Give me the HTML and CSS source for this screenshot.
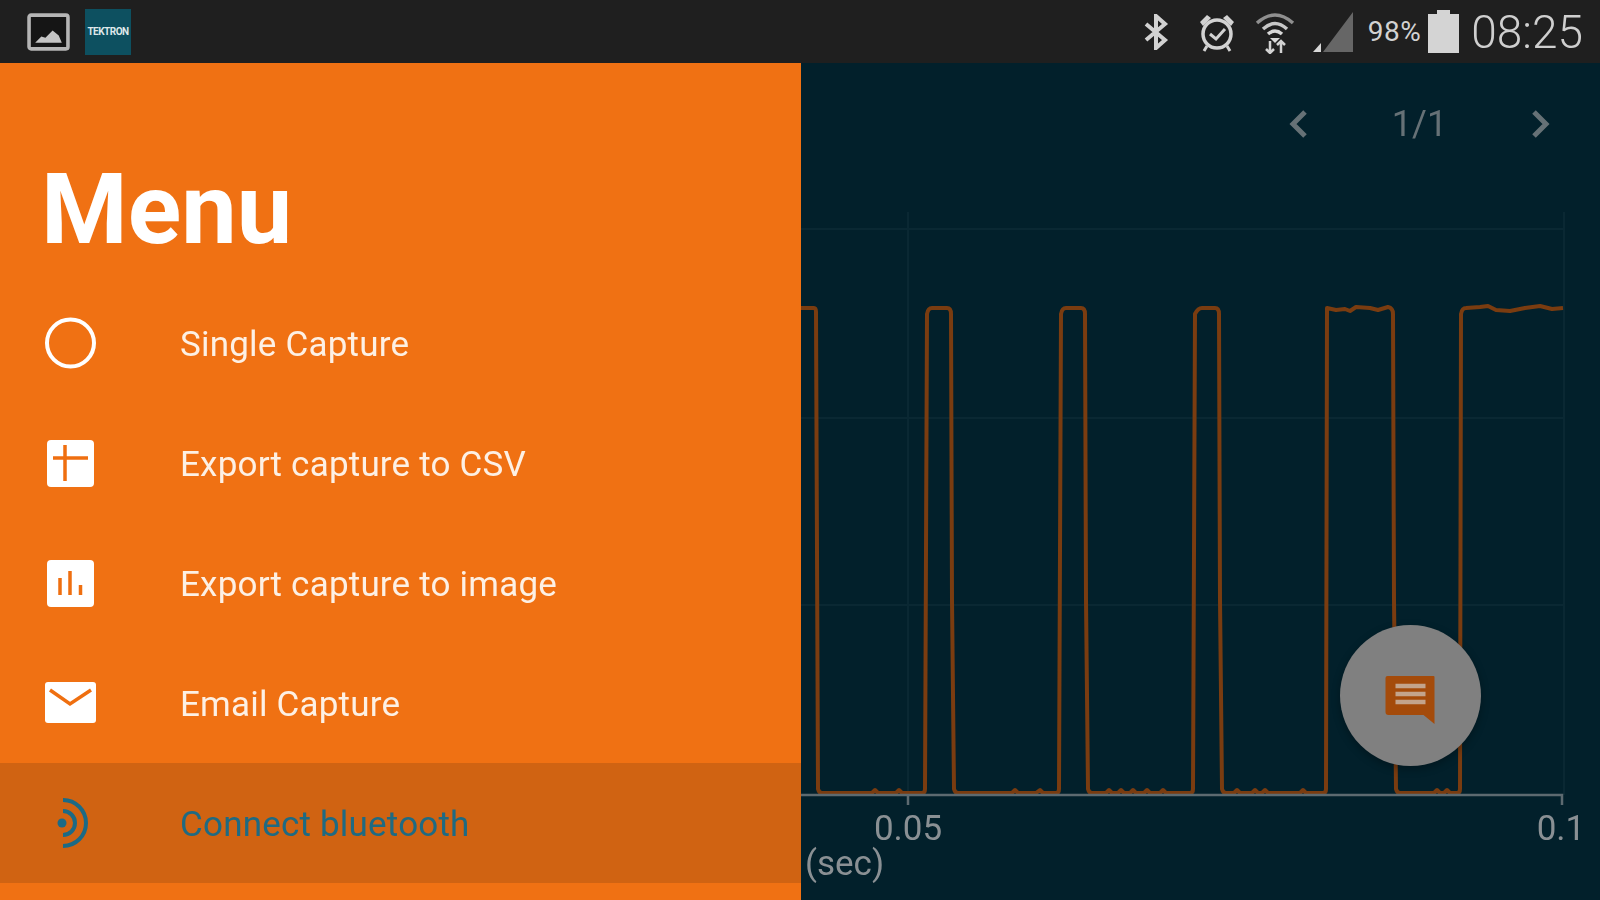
FILE: index.html
```html
<!DOCTYPE html>
<html lang="en">
<head>
    <meta charset="UTF-8">
    <meta name="viewport" content="width=device-width, initial-scale=1.0">
    <title>Capture Menu</title>
    <link rel="stylesheet" href="styles.css">
</head>
<body>
    <div id="status-bar">
        <div class="status-left">
            <svg class="icon-image" viewBox="0 0 42 37">
                <rect x="2" y="2" width="38" height="33" rx="2" fill="#151515" stroke="#b5b5b5" stroke-width="3.5"/>
                <path d="M8 29 L14 23 L18 24 L25 17 L31 22 L34 29 Z" fill="#c4c4c4"/>
            </svg>
            <div class="app-badge">TEKTRON</div>
        </div>
        <div class="status-right">
            <svg class="icon-bt" viewBox="0 0 26 36">
                <path d="M3 10 L22 26 L13 34 L13 2 L22 10 L3 26" fill="none" stroke="#d2d2d2" stroke-width="4"/>
            </svg>
            <svg class="icon-alarm" viewBox="0 0 38 40">
                <circle cx="19" cy="22" r="14" fill="none" stroke="#d2d2d2" stroke-width="3.5"/>
                <path d="M12 22 L18 27 L27 17" fill="none" stroke="#d2d2d2" stroke-width="3"/>
                <path d="M2 10 L9 3 L13 6 L5 14 Z M36 10 L29 3 L25 6 L33 14 Z" fill="#d2d2d2"/>
                <path d="M9 34 L6 39 M29 34 L32 39" stroke="#d2d2d2" stroke-width="3"/>
            </svg>
            <svg class="icon-wifi" viewBox="0 0 40 44">
                <path d="M2 13 Q20 -3 38 13" fill="none" stroke="#8f8f8f" stroke-width="3.5"/>
                <path d="M8 19 Q20 8 32 19" fill="none" stroke="#c8c8c8" stroke-width="3.5"/>
                <path d="M13 24 Q20 18 27 24" fill="none" stroke="#d8d8d8" stroke-width="3.5"/>
                <path d="M15 28 L25 28 L20 33 Z" fill="#d8d8d8"/>
                <path d="M15 31 V43 M11 39 L15 43 L19 39 M26 43 V31 M22 35 L26 31 L30 35" fill="none" stroke="#d2d2d2" stroke-width="2.5"/>
            </svg>
            <svg class="icon-signal" viewBox="0 0 40 40">
                <path d="M10 40 L40 0 V40 Z" fill="#666"/>
                <path d="M0 40 L8 31 V40 Z" fill="#d8d8d8"/>
            </svg>
            <span class="battery-text">98%</span>
            <svg class="icon-battery" viewBox="0 0 31 43">
                <path d="M9 0 H22 V4 H31 V43 H0 V4 H9 Z" fill="#d4d4d4"/>
            </svg>
            <span class="clock">08:25</span>
        </div>
    </div>

    <div id="main">
        <div id="drawer">
            <div class="drawer-title">Menu</div>
            <div class="menu-list">
                <div class="menu-item">
                    <svg class="menu-icon" viewBox="0 0 56 56">
                        <circle cx="28.5" cy="28" r="23.5" fill="none" stroke="#fff" stroke-width="4"/>
                    </svg>
                    <span class="menu-label">Single Capture</span>
                </div>
                <div class="menu-item">
                    <svg class="menu-icon" viewBox="0 0 56 56">
                        <rect x="5" y="5" width="47" height="47" rx="4" fill="#fff"/>
                        <path d="M23 10 V46 M11 23 H46" stroke="#ef6f10" stroke-width="3.5"/>
                    </svg>
                    <span class="menu-label">Export capture to CSV</span>
                </div>
                <div class="menu-item">
                    <svg class="menu-icon" viewBox="0 0 56 56">
                        <rect x="5" y="5" width="47" height="47" rx="4" fill="#fff"/>
                        <path d="M18 23 V40 M28 16 V40 M38.500 30 V40" stroke="#ef6f10" stroke-width="3.5"/>
                    </svg>
                    <span class="menu-label">Export capture to image</span>
                </div>
                <div class="menu-item">
                    <svg class="menu-icon" viewBox="0 0 56 56">
                        <rect x="3" y="7" width="51" height="41" rx="3" fill="#fff"/>
                        <path d="M8 15 L28 29 L49 15" fill="none" stroke="#ef6f10" stroke-width="3.5"/>
                    </svg>
                    <span class="menu-label">Email Capture</span>
                </div>
                <div class="menu-item selected">
                    <svg class="menu-icon" viewBox="0 0 56 56">
                        <circle cx="20" cy="28" r="4.500" fill="#1c6a85"/>
                        <path d="M21 16 A12 12 0 0 1 21 40 M21 5 A23 23 0 0 1 21 51" fill="none" stroke="#1c6a85" stroke-width="4"/>
                    </svg>
                    <span class="menu-label">Connect bluetooth</span>
                </div>
            </div>
        </div>

        <div id="chart">
            <svg class="chart-canvas" viewBox="801 63 799 837">
                <!-- grid -->
                <path d="M801 229 H1563 M801 418 H1563 M801 605 H1563 M908 212 V795 M1564 212 V795" fill="none" stroke="#0a2833" stroke-width="2"/>
                <!-- waveform -->
                <path class="trace" d="M801 308 H814 Q816 308 816 312 L818 789 Q819 793 822 793 H872 L875 790 L878 793 H896 L899 790 L902 793 H922 Q925 793 925 789 L927 314 Q928 308 932 308 H947 Q951 308 951 314 L952 600 L954 789 Q955 793 958 793 H1012 L1015 790 L1018 793 H1036 L1040 790 L1043 793 H1056 Q1059 793 1059 789 L1061 314 Q1062 308 1066 308 H1081 Q1085 308 1085 314 L1086 600 L1088 789 Q1089 793 1092 793 H1106 L1109 790 L1112 793 H1118 L1121 790 L1124 793 H1130 L1133 790 L1136 793 H1144 L1147 790 L1150 793 H1160 L1163 790 L1166 793 H1190 Q1193 793 1193 789 L1195 314 Q1198 308 1202 308 H1215 Q1219 308 1219 314 L1220 600 L1222 789 Q1223 793 1226 793 H1234 L1237 790 L1240 793 H1252 L1255 790 L1258 793 H1262 L1265 790 L1268 793 H1300 L1303 790 L1306 793 H1323 Q1326 793 1326 789 L1327 308 L1336 310 L1345 309 L1350 311 L1356 307 L1370 308 L1378 310 L1388 307 Q1393 308 1393 314 L1394 600 L1396 789 Q1397 793 1400 793 H1434 L1437 790 L1440 793 H1444 L1447 790 L1450 793 H1457 Q1460 793 1460 789 L1461 314 Q1462 308 1466 308 L1480 307 L1488 306 L1496 310 L1510 311 L1525 308 L1540 306 L1552 309 L1563 308" fill="none" stroke="#7a3c10" stroke-width="4"/>
                <!-- axis -->
                <path d="M801 795 H1562 V805 M908 795 V805" fill="none" stroke="#5d6a70" stroke-width="2.500"/>
                <text class="axis-label" x="908" y="840" text-anchor="middle">0.05</text>
                <text class="axis-label" x="1561" y="840" text-anchor="middle">0.1</text>
                <text class="axis-label" x="805" y="875">(sec)</text>
            </svg>

            <div class="pager">
                <svg class="pager-arrow" viewBox="0 0 22 32">
                    <path d="M18 4 L6 16 L18 28" fill="none" stroke="#667176" stroke-width="5"/>
                </svg>
                <span class="pager-count">1/1</span>
                <svg class="pager-arrow" viewBox="0 0 22 32">
                    <path d="M4 4 L16 16 L4 28" fill="none" stroke="#667176" stroke-width="5"/>
                </svg>
            </div>

            <div class="fab">
                <svg class="fab-icon" viewBox="0 0 50 49">
                    <path d="M2 1 H48 Q49 1 49 2 V49 L38 40 H3 Q0 40 0 37 V3 Q0 1 2 1 Z" fill="#a44b0b"/>
                    <path d="M10 11 H40 M10 19 H40 M10 27 H40" stroke="#c3a48c" stroke-width="4.500"/>
                </svg>
            </div>
        </div>
    </div>
</body>
</html>
```

FILE: styles.css
```css
body {
    display: flex;
    flex-direction: column;
    height: 100vh;
    margin: 0;
    overflow: hidden;
    background-color: #02202b;
    font-family: Roboto, "Liberation Sans", sans-serif;
    filter: blur(0.6px); /* the source capture is a soft upscale */
}

#status-bar {
    display: flex;
    justify-content: space-between;
    align-items: center;
    flex: none;
    height: 63px;
    padding: 0 17px 0 27px;
    box-sizing: border-box;
    background-color: #1f1f1f;
}
.status-left {
    display: flex;
    align-items: center;
}
.status-right {
    display: flex;
    align-items: center;
}
.icon-image {
    width: 43px;
    height: 38px;
}
.app-badge {
    display: flex;
    justify-content: center;
    align-items: center;
    width: 46px;
    height: 46px;
    margin-left: 15px;
    overflow: hidden;
    background-color: #0d5060;
    color: #dfe8ea;
    font-size: 10px;
    font-weight: bold;
    letter-spacing: -0.5px;
}
.icon-bt {
    width: 26px;
    height: 36px;
}
.icon-alarm {
    width: 38px;
    height: 40px;
    margin-left: 29px;
}
.icon-wifi {
    width: 40px;
    height: 44px;
    margin-left: 19px;
}
.icon-signal {
    width: 40px;
    height: 40px;
    margin-left: 18px;
}
.battery-text {
    margin-left: 15px;
    color: #d2d2d2;
    font-size: 28px;
    letter-spacing: 0.5px;
}
.icon-battery {
    width: 31px;
    height: 43px;
    margin-left: 7px;
}
.clock {
    margin-left: 12px;
    color: #cfcfcf;
    font-size: 46px;
    font-weight: 300;
}

#main {
    display: flex;
    flex: 1;
    min-height: 0;
}

#drawer {
    flex: none;
    width: 801px;
    background-color: #f07113;
    color: #fdf0e4;
}
.drawer-title {
    display: flex;
    align-items: center;
    height: 220px;
    padding-left: 41px;
    padding-top: 72px;
    box-sizing: border-box;
    color: #fff;
    font-size: 99px;
    font-weight: 700;
}
.menu-item {
    display: flex;
    align-items: center;
    height: 120px;
    padding-left: 42px;
}
.menu-item.selected {
    background-color: #d06312;
    color: #1f6a82;
}
.menu-icon {
    flex: none;
    width: 56px;
    height: 56px;
}
.menu-label {
    margin-left: 82px;
    margin-top: 3px;
    font-size: 35px;
    letter-spacing: 0.2px;
}

#chart {
    position: relative;
    flex: 1;
}
.chart-canvas {
    display: block;
    width: 100%;
    height: 100%;
}
.trace {
    stroke-linejoin: round;
}
.axis-label {
    fill: #8a9094;
    font-size: 35px;
}
.pager {
    position: absolute;
    top: 40px;
    left: 486px;
    display: flex;
    justify-content: space-between;
    align-items: center;
    width: 265px;
}
.pager-arrow {
    width: 22px;
    height: 32px;
}
.pager-count {
    color: #667176;
    font-size: 36px;
}
.fab {
    position: absolute;
    top: 562px;
    left: 539px;
    display: flex;
    justify-content: center;
    align-items: center;
    width: 141px;
    height: 141px;
    border-radius: 50%;
    background-color: #808080;
    box-shadow: 0 3px 8px rgba(0, 0, 0, 0.3);
}
.fab-icon {
    width: 51px;
    height: 49px;
    margin-top: 8px;
}
```
